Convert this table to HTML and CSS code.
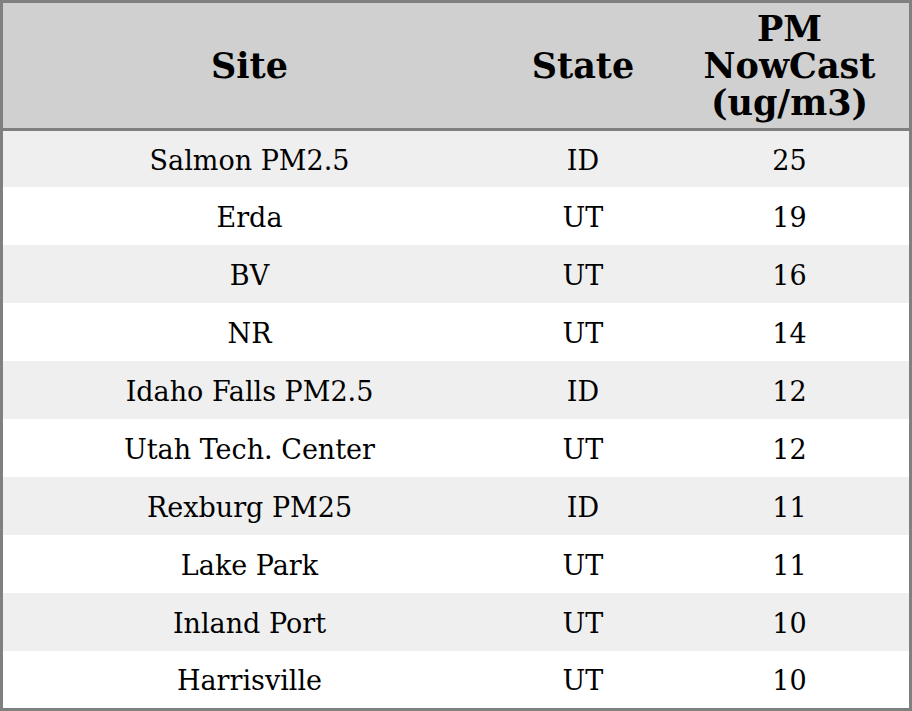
FILE: index.html
```html
<!DOCTYPE html>
<html>
<head>
<meta charset="utf-8">
<link rel="stylesheet" href="styles.css">
</head>
<body>
<table class="grid">
  <colgroup>
    <col class="c-site">
    <col class="c-state">
    <col class="c-pm">
  </colgroup>
  <thead>
    <tr>
      <th>Site</th>
      <th>State</th>
      <th>PM<br>NowCast<br>(ug/m3)</th>
    </tr>
  </thead>
  <tbody>
    <tr class="odd first"><td>Salmon PM2.5</td><td>ID</td><td>25</td></tr>
    <tr><td>Erda</td><td>UT</td><td>19</td></tr>
    <tr class="odd"><td>BV</td><td>UT</td><td>16</td></tr>
    <tr><td>NR</td><td>UT</td><td>14</td></tr>
    <tr class="odd"><td>Idaho Falls PM2.5</td><td>ID</td><td>12</td></tr>
    <tr><td>Utah Tech. Center</td><td>UT</td><td>12</td></tr>
    <tr class="odd"><td>Rexburg PM25</td><td>ID</td><td>11</td></tr>
    <tr><td>Lake Park</td><td>UT</td><td>11</td></tr>
    <tr class="odd"><td>Inland Port</td><td>UT</td><td>10</td></tr>
    <tr class="last"><td>Harrisville</td><td>UT</td><td>10</td></tr>
  </tbody>
</table>
</body>
</html>
```
FILE: styles.css
```css
html, body {
  margin: 0;
  padding: 0;
  background: #ffffff;
}
.grid {
  width: 912px;
  table-layout: fixed;
  border-collapse: separate;
  border-spacing: 0;
  border: 3px solid #808080;
  font-family: "DejaVu Serif", serif;
  color: #000;
}
.c-site { width: 493px; }
.c-state { width: 174px; }
.c-pm { width: 239px; }
.grid th {
  background: #d0d0d0;
  font-size: 35px;
  font-weight: bold;
  line-height: 37px;
  height: 125px;
  padding: 0;
  border-bottom: 3px solid #808080;
  text-align: center;
  vertical-align: middle;
}
.grid td {
  box-sizing: border-box;
  font-size: 27px;
  height: 58px;
  padding: 2px 0 0 0;
  text-align: center;
  vertical-align: middle;
  background: #ffffff;
}
.grid tr.odd td {
  background: #efefef;
}
.grid tr.first td { height: 56px; }
.grid tr.last td { height: 57px; }
```
